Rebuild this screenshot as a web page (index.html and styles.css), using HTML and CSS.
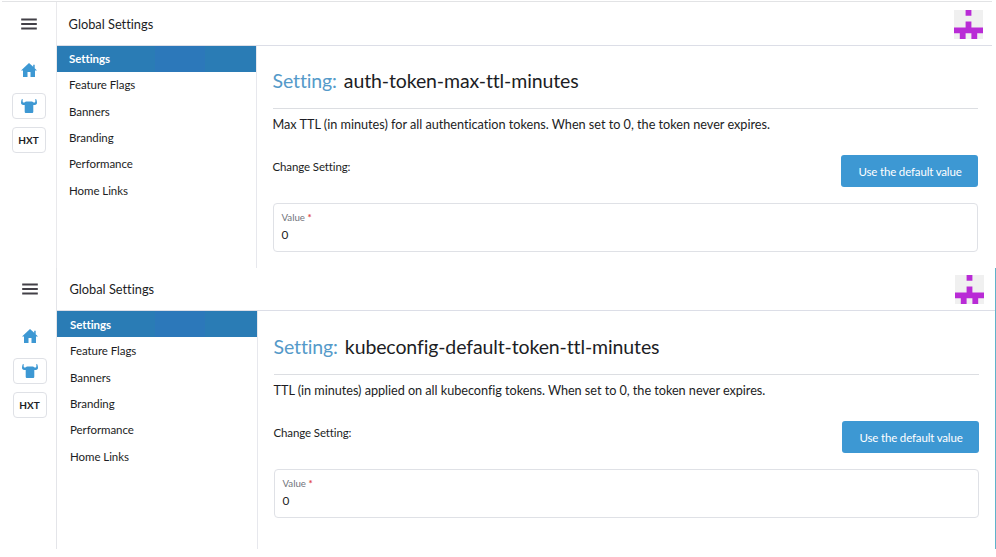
FILE: index.html
```
<!DOCTYPE html>
<html lang="en">
<head>
<meta charset="utf-8">
<title>Global Settings</title>
<link rel="stylesheet" href="styles.css">
</head>
<body>
<svg width="0" height="0" class="defs">
  <symbol id="menu" viewBox="0 0 16 12"><path d="M.2 1.500h15.600M.2 6h15.600M.2 10.500h15.600" stroke="#424047" stroke-width="1.900"/></symbol>
  <symbol id="home" viewBox="0 0 16 14"><path d="M8 0 0 7.500h2V14h4.500V9h3v5H14V7.500h2l-2.300-2.200V1.800h-1.500v2z"/></symbol>
  <symbol id="bull" viewBox="0 0 16 14"><path d="M.9 0C.1 1.500-.2 3.500.2 4.800.5 5.800 1.500 6 3.700 6v6.500c0 1 .5 1.500 1.400 1.500h5.800c.9 0 1.400-.5 1.400-1.500V6c2.200 0 3.200-.2 3.500-1.200.4-1.300.1-3.300-.7-4.800l-.9.200c.3 1.600.2 2.500-.1 3-.5.600-1.300.4-1.900 0-.4-.5-.8-.7-1.500-.7H5.300c-.7 0-1.100.2-1.500.7-.6.400-1.400.6-1.900 0-.3-.5-.4-1.400-.1-3z"/></symbol>
  <symbol id="avatar" viewBox="0 0 5 5"><path fill="#f0f0f0" d="M0 0h5v5H0z"/><path fill="#b92bd6" d="M2 0h1v1H2zM2 2h1v1h2v1H4v1H3V4H2v1H1V4H0V3h2z"/></symbol>
</svg>

<section class="panel panel-first">
  <aside class="rail">
    <svg class="menu"><use href="#menu"/></svg>
    <svg class="home"><use href="#home"/></svg>
    <div class="tile"><svg class="bull"><use href="#bull"/></svg></div>
    <div class="tile">HXT</div>
  </aside>
  <div class="page">
    <header class="header"><span>Global Settings</span><svg class="avatar"><use href="#avatar"/></svg></header>
    <div class="body">
      <nav class="nav">
        <a class="active">Settings</a><a>Feature Flags</a><a>Banners</a><a>Branding</a><a>Performance</a><a>Home Links</a>
      </nav>
      <main class="main">
        <h1><span class="kind">Setting:</span> <span class="name">auth-token-max-ttl-minutes</span></h1>
        <p class="desc">Max TTL (in minutes) for all authentication tokens. When set to 0, the token never expires.</p>
        <div class="change"><span>Change Setting:</span><button>Use the default value</button></div>
        <div class="field"><label>Value <b>*</b></label><span>0</span></div>
      </main>
    </div>
  </div>
</section>

<section class="panel panel-second">
  <aside class="rail">
    <svg class="menu"><use href="#menu"/></svg>
    <svg class="home"><use href="#home"/></svg>
    <div class="tile"><svg class="bull"><use href="#bull"/></svg></div>
    <div class="tile">HXT</div>
  </aside>
  <div class="page">
    <header class="header"><span>Global Settings</span><svg class="avatar"><use href="#avatar"/></svg></header>
    <div class="body">
      <nav class="nav">
        <a class="active">Settings</a><a>Feature Flags</a><a>Banners</a><a>Branding</a><a>Performance</a><a>Home Links</a>
      </nav>
      <main class="main">
        <h1><span class="kind">Setting:</span> <span class="name">kubeconfig-default-token-ttl-minutes</span></h1>
        <p class="desc">TTL (in minutes) applied on all kubeconfig tokens. When set to 0, the token never expires.</p>
        <div class="change"><span>Change Setting:</span><button>Use the default value</button></div>
        <div class="field"><label>Value <b>*</b></label><span>0</span></div>
      </main>
    </div>
  </div>
</section>
</body>
</html>
```
FILE: styles.css
```
* { box-sizing: border-box; }
body { margin: 0; padding-top: 1px; background: #fff; color: #1c1d24; font: 11.5px/16px Lato, sans-serif; font-variant-ligatures: none; }
.defs { position: absolute; }
svg { display: block; flex: none; }
.panel { display: grid; overflow: hidden; }
.panel-first { grid-template-columns: 57px 1fr; width: 992px; height: 267px; background: linear-gradient(#e2e3e5, #e2e3e5) 2px 0 / 100% 1px no-repeat; }
.panel-second { grid-template-columns: 57px 1fr; width: 996px; height: 281px; border-right: 1px solid #5fb3cb; }

.rail { display: flex; flex-direction: column; align-items: center; border-right: 1px solid #e4e5e9; }
.panel-first .rail { border-right: 1px solid #e9e9ec; margin-top: 1px; padding: 16px 0 0 1px; }
.panel-second .rail { padding: 15px 0 0 3px; }
.menu { width: 16px; height: 12px; margin-bottom: 33px; }
.home { width: 16px; height: 14px; margin-bottom: 16px; fill: #3d98d3; }
.panel-second .menu { margin-bottom: 34px; }
.panel-second .home { margin-bottom: 15px; }
.tile { display: flex; align-items: center; justify-content: center; width: 34px; height: 26px; margin-bottom: 8px; border: 1px solid #dfe1e6; border-radius: 4px; font-size: 10px; font-weight: 700; }
.bull { width: 16px; height: 14px; fill: #3d98d3; }

.page { display: flex; flex-direction: column; min-width: 0; }
.header { display: flex; justify-content: space-between; align-items: center; flex: none; height: 45px; padding: 1px 9px 0 11.6px; border-bottom: 1px solid #dcdee7; font-size: 12.8px; }
.panel-second .header { height: 43px; padding: 0 11px 0 12.5px; }
.avatar { width: 29px; height: 29px; margin-top: 2px; }
.panel-second .avatar { margin-top: 1px; }

.body { display: flex; flex: 1; min-height: 0; }
.nav { flex: none; width: 200px; border-right: 1px solid #e7e8ed; }
.panel-second .nav { width: 200.5px; }
.nav a { display: block; height: 26.35px; padding-left: 12px; line-height: 26px; font-size: 11.5px; letter-spacing: -.06px; }
.panel-second .nav a { padding-left: 13px; line-height: 27px; }
.nav .active { color: #fff; font-weight: 700; background: linear-gradient(90deg, #2a7cb5 98px, #2c78ba 98px, #2c78ba 148px, #2a7cb5 148px); }

.main { flex: 1; padding: 0 14px 0 15.5px; }
.panel-second .main { padding: 0 16px 0 16px; }
h1 { display: flex; align-items: center; gap: 7px; height: 63px; margin: 0; padding-top: 8px; border-bottom: 1px solid #dcdee2; font-size: 19.5px; font-weight: 400; line-height: 24px; letter-spacing: -.12px; }
.panel-second h1 { height: 64px; }
.kind { color: #559ac9; }
.desc { margin: 7px 0 0; font-size: 12.7px; letter-spacing: -.02px; }
.panel-second .desc { letter-spacing: -.04px; }
.change { display: flex; justify-content: space-between; height: 32px; margin-top: 23px; }
.change > span { margin-top: 4px; letter-spacing: -.12px; }
button { width: 137px; height: 32px; padding: 0 0 0 1px; border: 0; border-radius: 3px; background: #3d98d3; color: #fff; font: 11.5px Lato, sans-serif; letter-spacing: -.16px; }
.field { display: flex; flex-direction: column; height: 49px; margin-top: 16px; padding: 5px 8px; border: 1px solid #dfe1e6; border-radius: 4px; }
label { font-size: 9.7px; color: #71747c; }
label b { color: #e04646; font-weight: 700; }
.field > span { font-size: 11.8px; margin-top: 2px; }
```
